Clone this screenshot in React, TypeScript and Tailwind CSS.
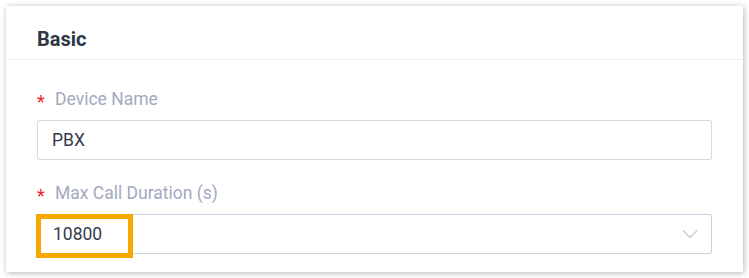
import { ChevronDown } from "lucide-react"

export default function App() {
  return (
    <div className="w-[749px] h-[278px] bg-white p-[6px] font-['Roboto',sans-serif]">
      <div className="h-full bg-white shadow-[1px_1px_6px_rgba(0,0,0,0.3)]">
        <div className="h-[54px] flex items-center px-[31px] pt-[12px] border-b border-[#eef0f4]">
          <h2 className="text-[20px] font-bold text-[#2f3744]">Basic</h2>
        </div>

        <div className="px-[31px] pt-[27px]">
          <div className="flex items-center h-[24px] text-[17.5px]">
            <span className="text-[#f5222d] w-[18px] text-[18px] leading-none pt-[6px]">*</span>
            <span className="text-[#a3a9bf]">Device Name</span>
          </div>
          <div className="mt-[9px] h-[40px] border border-[#d6d8e4] rounded-[2px] flex items-center px-[14px] text-[17.5px] text-[#323c4c]">
            PBX
          </div>

          <div className="mt-[21px] flex items-center h-[24px] text-[17.5px]">
            <span className="text-[#f5222d] w-[18px] text-[18px] leading-none pt-[6px]">*</span>
            <span className="text-[#a3a9bf]">Max Call Duration (s)</span>
          </div>
          <div className="relative mt-[9px] h-[40px] border border-[#c9d2e0] rounded-[2px] flex items-center justify-between pl-[15px] pr-[7px] text-[17.5px] text-[#323c4c]">
            <span>10800</span>
            <ChevronDown className="w-[28px] h-[28px] text-[#c4c8d0]" strokeWidth={1} />
            <div className="absolute left-[-2px] top-[-1px] w-[97px] h-[44px] border-[5px] border-[#f6a800]" />
          </div>
        </div>
      </div>
    </div>
  )
}
